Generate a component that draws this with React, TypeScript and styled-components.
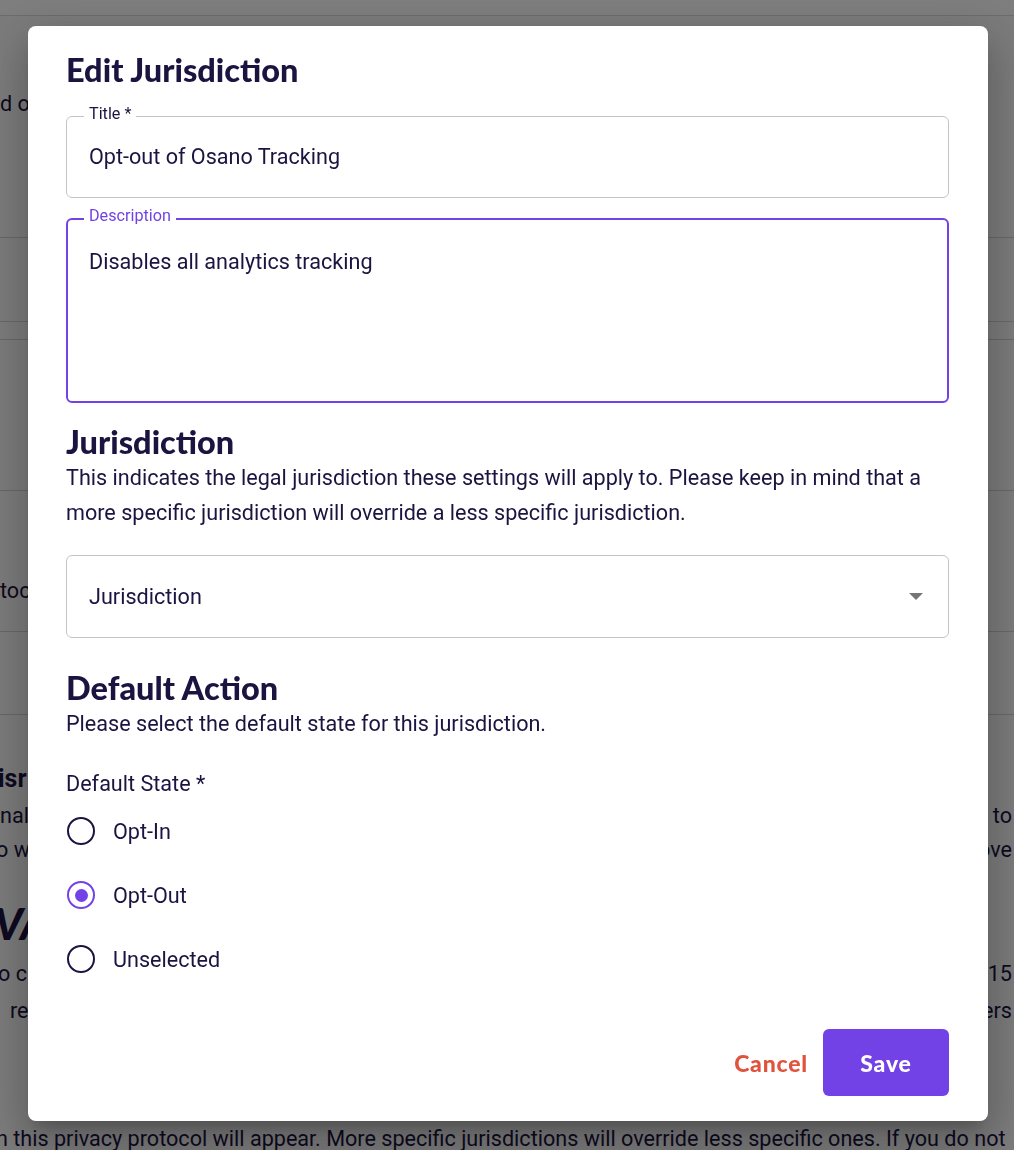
import React from "react";
import styled, { createGlobalStyle, css } from "styled-components";

const Global = createGlobalStyle`
  html, body { margin: 0; padding: 0; }
  body {
    font-family: Roboto, "Liberation Sans", Arial, sans-serif;
    color: #1b1340;
    background: #f7f7f7;
    overflow: hidden;
  }
  * { box-sizing: border-box; }
`;

const INK = "#1b1340";
const PURPLE = "#7342e6";
const HEAD_FONT = `Lato, "Open Sans", "Liberation Sans", sans-serif`;
const BODY = "21.6px";

/* ---------- background page ---------- */
const Page = styled.div`
  height: 1150px;
  overflow: hidden;
  background: #f7f7f7;
  display: flex;
  flex-direction: column;
`;

const BgRow = styled.div<{ $h: number; $line?: boolean; $mt?: number }>`
  flex: none;
  height: ${(p) => p.$h}px;
  margin-top: ${(p) => p.$mt ?? 0}px;
  display: flex;
  align-items: center;
  justify-content: space-between;
  white-space: nowrap;
  overflow: hidden;
  font-size: ${BODY};
  color: ${INK};
  ${(p) =>
    p.$line &&
    css`
      border-bottom: 1px solid #cfcfcf;
    `}
`;

const BgHeader = styled.div`
  flex: none;
  height: 16px;
  background: #fcfcfc;
  border-bottom: 1px solid #d8d8d8;
`;

const BgFrag = styled.span<{ $shift?: number; $bold?: boolean }>`
  margin-left: ${(p) => p.$shift ?? 0}px;
  font-weight: ${(p) => (p.$bold ? 700 : 400)};
  font-size: ${(p) => (p.$bold ? "25px" : "inherit")};
`;

const BgBig = styled.span`
  margin-left: -6px;
  font-family: ${HEAD_FONT};
  font-size: 44px;
  font-weight: 900;
  font-style: italic;
`;

const BgRight = styled.span`
  padding-right: 2px;
`;

/* ---------- modal ---------- */
const Backdrop = styled.div`
  position: fixed;
  inset: 0;
  background: rgba(0, 0, 0, 0.5);
  display: flex;
  justify-content: center;
  align-items: flex-start;
  padding-top: 26px;
`;

const Dialog = styled.div`
  width: 960px;
  margin-left: 2px;
  background: #fff;
  border-radius: 8px;
  padding: 26px 39px 25px 38px;
  display: flex;
  flex-direction: column;
  box-shadow: 0 11px 15px -7px rgba(0, 0, 0, 0.2),
    0 24px 38px 3px rgba(0, 0, 0, 0.14), 0 9px 46px 8px rgba(0, 0, 0, 0.12);
`;

const Heading = styled.h2<{ $mt?: number }>`
  margin: ${(p) => p.$mt ?? 0}px 0 0 0;
  font-family: ${HEAD_FONT};
  font-weight: 900;
  font-size: 32.5px;
  line-height: 36px;
  color: ${INK};
`;

const Para = styled.p`
  margin: 0;
  font-size: ${BODY};
  line-height: 35px;
  color: ${INK};
`;

const Field = styled.div<{ $focused?: boolean; $h: number; $mt: number }>`
  position: relative;
  margin-top: ${(p) => p.$mt}px;
  height: ${(p) => p.$h}px;
  border-radius: 6px;
  border: ${(p) => (p.$focused ? `2px solid ${PURPLE}` : "1px solid #c4c4c4")};
  padding: ${(p) => (p.$focused ? "30px 21px" : "0 22px")};
  display: flex;
  align-items: ${(p) => (p.$focused ? "flex-start" : "center")};
  font-size: ${BODY};
  line-height: 24px;
  color: ${INK};
`;

const FieldLabel = styled.span<{ $focused?: boolean }>`
  position: absolute;
  left: ${(p) => (p.$focused ? 16 : 17)}px;
  top: ${(p) => (p.$focused ? -13 : -12)}px;
  padding: 0 5px;
  background: #fff;
  font-size: 16.2px;
  line-height: 18px;
  color: ${(p) => (p.$focused ? PURPLE : INK)};
`;

const SelectBox = styled.div`
  margin-top: 25px;
  height: 83px;
  border: 1px solid #c4c4c4;
  border-radius: 6px;
  padding: 0 25px 0 22px;
  display: flex;
  align-items: center;
  justify-content: space-between;
  font-size: ${BODY};
  color: ${INK};
`;

const Caret = styled.span`
  width: 0;
  height: 0;
  border-left: 7px solid transparent;
  border-right: 7px solid transparent;
  border-top: 7px solid #757575;
`;

const GroupLabel = styled.div`
  margin-top: 31px;
  font-size: ${BODY};
  line-height: 24px;
  color: ${INK};
`;

const RadioGroup = styled.div`
  margin-top: 3px;
  display: flex;
  flex-direction: column;
`;

const RadioRow = styled.label`
  height: 64px;
  display: flex;
  align-items: center;
  gap: 18px;
  font-size: ${BODY};
  color: ${INK};
`;

const RadioCircle = styled.span<{ $on?: boolean }>`
  width: 28px;
  height: 28px;
  margin-left: 1px;
  border-radius: 50%;
  border: 2.6px solid ${(p) => (p.$on ? PURPLE : INK)};
  display: flex;
  align-items: center;
  justify-content: center;
  &::after {
    content: "";
    width: 13px;
    height: 13px;
    border-radius: 50%;
    background: ${PURPLE};
    display: ${(p) => (p.$on ? "block" : "none")};
  }
`;

const Actions = styled.div`
  margin-top: 38px;
  display: flex;
  justify-content: flex-end;
  align-items: center;
  gap: 15px;
`;

const Btn = styled.button<{ $primary?: boolean }>`
  border: none;
  cursor: pointer;
  font-family: ${HEAD_FONT};
  font-weight: 900;
  font-size: 23px;
  letter-spacing: 0.8px;
  border-radius: 6px;
  height: 67px;
  ${(p) =>
    p.$primary
      ? css`
          width: 126px;
          background: ${PURPLE};
          color: #fff;
        `
      : css`
          background: transparent;
          color: #e0533d;
          padding: 0;
        `}
`;

const radios = [
  { label: "Opt-In", on: false },
  { label: "Opt-Out", on: true },
  { label: "Unselected", on: false },
];

export default function App() {
  return (
    <>
      <Global />
      <Page>
        <BgHeader />
        <BgRow $h={175}>
          <BgFrag>d o</BgFrag>
        </BgRow>
        <BgRow $h={47} $line />
        <BgRow $h={84} $line />
        <BgRow $h={18} $line />
        <BgRow $h={151} $line />
        <BgRow $h={58} />
        <BgRow $h={83} $line>
          <BgFrag>toco</BgFrag>
        </BgRow>
        <BgRow $h={83} $line />
        <BgRow $h={34} $mt={46}>
          <BgFrag $bold $shift={-2}>isr</BgFrag>
        </BgRow>
        <BgRow $h={34} $mt={3}>
          <BgFrag>nal</BgFrag>
          <BgRight>to</BgRight>
        </BgRow>
        <BgRow $h={34}>
          <BgFrag $shift={-4}>o w</BgFrag>
          <BgRight>ove</BgRight>
        </BgRow>
        <BgRow $h={50} $mt={32}>
          <BgBig>VA</BgBig>
        </BgRow>
        <BgRow $h={36} $mt={7}>
          <BgFrag $shift={-2}>o c</BgFrag>
          <BgRight>15</BgRight>
        </BgRow>
        <BgRow $h={36} $mt={1}>
          <BgFrag $shift={10}>rec</BgFrag>
          <BgRight>ers</BgRight>
        </BgRow>
        <BgRow $h={36} $mt={92}>
          <BgFrag $shift={-4}>
            n this privacy protocol will appear. More specific jurisdictions
            will override less specific ones. If you do not
          </BgFrag>
        </BgRow>
      </Page>

      <Backdrop>
        <Dialog>
          <Heading>Edit Jurisdiction</Heading>

          <Field $h={82} $mt={28}>
            <FieldLabel>Title *</FieldLabel>
            Opt-out of Osano Tracking
          </Field>

          <Field $h={185} $mt={20} $focused>
            <FieldLabel $focused>Description</FieldLabel>
            Disables all analytics tracking
          </Field>

          <Heading $mt={21}>Jurisdiction</Heading>
          <Para>
            This indicates the legal jurisdiction these settings will apply to.
            Please keep in mind that a more specific jurisdiction will override a
            less specific jurisdiction.
          </Para>

          <SelectBox>
            <span>Jurisdiction</span>
            <Caret />
          </SelectBox>

          <Heading $mt={32}>Default Action</Heading>
          <Para>Please select the default state for this jurisdiction.</Para>

          <GroupLabel>Default State *</GroupLabel>
          <RadioGroup>
            {radios.map((r) => (
              <RadioRow key={r.label}>
                <RadioCircle $on={r.on} />
                {r.label}
              </RadioRow>
            ))}
          </RadioGroup>

          <Actions>
            <Btn>Cancel</Btn>
            <Btn $primary>Save</Btn>
          </Actions>
        </Dialog>
      </Backdrop>
    </>
  );
}
